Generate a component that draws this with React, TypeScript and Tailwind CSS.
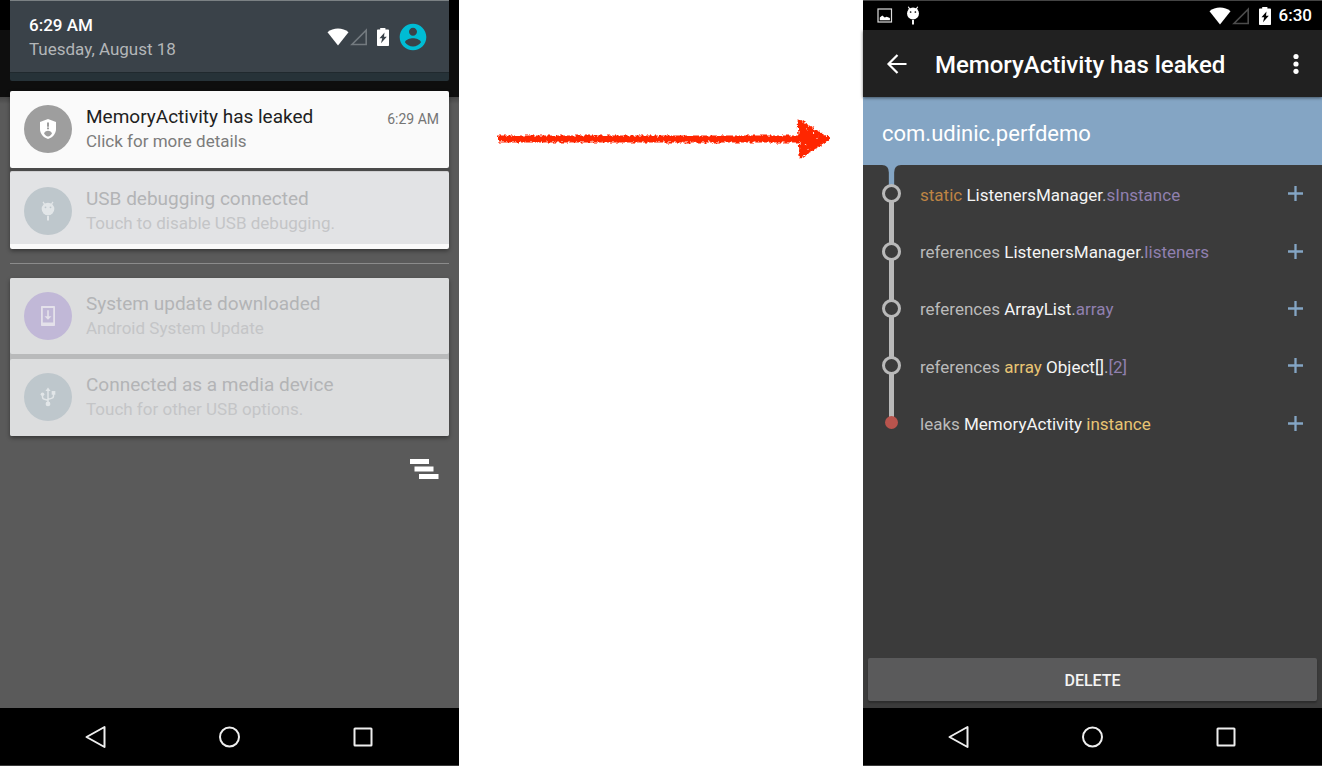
import type { ReactNode } from "react";

function WifiIcon() {
  return (
    <svg className="h-[18px] w-[22px]" viewBox="0 0 22 18" aria-hidden="true">
      <path d="M0.5 4.2C3.4 1.8 7 .5 11 .5s7.600 1.300 10.500 3.700L11 17.500z" fill="#fff" />
    </svg>
  );
}

function SignalIcon({ color }: { color: string }) {
  return (
    <svg className="ml-px h-[18px] w-[18px]" viewBox="0 0 18 18" aria-hidden="true">
      <path d="M16.200 2.200v14.300H2z" fill="none" stroke={color} strokeWidth="1.600" />
    </svg>
  );
}

function BatteryIcon({ bolt }: { bolt: string }) {
  return (
    <svg className="ml-2 h-[18px] w-3.5" viewBox="0 0 14 18" aria-hidden="true">
      <path d="M4.200 0h5.200v1.500h2.800c.5 0 .8.300.8.800v14.900c0 .5-.3.800-.8.800H1.800c-.5 0-.8-.3-.8-.8V2.300c0-.5.300-.8.800-.8h2.400z" fill="#fff" />
      <path d="M8.500 4.500L3.500 10.300h2.700L5 15.300l5.800-6.500H8z" fill={bolt} />
    </svg>
  );
}

function AndroidHead({ className, eye }: { className: string; eye: string }) {
  return (
    <svg className={className} viewBox="0 0 14 20" aria-hidden="true">
      <path d="M2 .8l2 3M12 .8l-2 3" stroke="currentColor" strokeWidth="1.200" />
      <circle cx="7" cy="8" r="6.300" fill="currentColor" />
      <path d="M6 14.800h2v4.600H6z" fill="currentColor" />
      <circle cx="4.500" cy="6.300" r="0.900" fill={eye} />
      <circle cx="9.500" cy="6.300" r="0.900" fill={eye} />
    </svg>
  );
}

function ShieldIcon() {
  return (
    <svg className="h-5 w-[18px]" viewBox="0 0 18 20" aria-hidden="true">
      <path d="M9 0L17 3v7c0 4.600-3.300 8.600-8 10-4.700-1.400-8-5.400-8-10V3z" fill="#fff" />
      <path d="M8 3.500h2v4.200H8zM8 8.600h2v1.600H8z" fill="#9e9e9e" />
      <path d="M5 14.200c1.200-1.800 2.500-2.500 4-2.500s2.800.7 4 2.500c-.9 1.800-2.400 3-4 3.400-1.600-.4-3.100-1.600-4-3.400z" fill="#9e9e9e" />
    </svg>
  );
}

function UpdateIcon() {
  return (
    <svg className="h-5 w-4" viewBox="0 0 16 20" aria-hidden="true">
      <path fillRule="evenodd" d="M2 0h12c.6 0 1 .4 1 1v18c0 .6-.4 1-1 1H2c-.6 0-1-.4-1-1V1c0-.6.4-1 1-1zm.8 2v14.500h10.400V2z" fill="#e4e1ea" />
      <path d="M7.200 4.300h1.600v5.900h2.700L8 13.700l-3.500-3.500h2.700z" fill="#e4e1ea" />
    </svg>
  );
}

function UsbIcon() {
  return (
    <svg className="h-[22px] w-[22px]" viewBox="0 0 24 24" aria-hidden="true">
      <g fill="none" stroke="#e2e6e8" strokeWidth="1.600">
        <path d="M12 4v15M6 9.500V12c0 2 1.500 2.500 3 2.800l3 .7M18 7.500V11c0 2-1.500 2.500-3 2.800l-3 .7" />
      </g>
      <g fill="#e2e6e8">
        <path d="M12 1.500l2.800 4H9.200z" />
        <circle cx="12" cy="19.500" r="2.600" />
        <circle cx="6" cy="9" r="2" />
        <path d="M16 5.500h4v4h-4z" />
      </g>
    </svg>
  );
}

type NoticeProps = {
  icon: ReactNode;
  disc: string;
  title: string;
  detail: string;
  time?: string;
  faded?: boolean;
  className: string;
};

function Notice({ icon, disc, title, detail, time, faded, className }: NoticeProps) {
  return (
    <article className={`flex gap-3.5 px-3.5 ${className}`}>
      <div className={`flex size-12 shrink-0 items-center justify-center rounded-full ${disc}`}>{icon}</div>
      <div className="min-w-0 flex-1">
        <h2 className={`text-[19px] leading-6 ${faded ? "text-[#b3b4b6]" : "text-[#212121]"}`}>{title}</h2>
        <p className={`text-[17px] leading-6 ${faded ? "text-[#c4c5c7]" : "text-[#7c7c7c]"}`}>{detail}</p>
      </div>
      {time && <time className="-mr-1 text-sm leading-7 text-[#757575]">{time}</time>}
    </article>
  );
}

function NavBar() {
  return (
    <nav className="flex h-[58px] shrink-0 justify-center border-b border-[#3a3a3a] bg-black">
      <button aria-label="Back" className="flex w-[29%] items-center justify-center">
        <svg className="size-6" viewBox="0 0 24 24" fill="none" stroke="#eee" strokeWidth="2" strokeLinejoin="round">
          <path d="M20.500 2v20L2.500 12z" />
        </svg>
      </button>
      <button aria-label="Home" className="flex w-[29%] items-center justify-center">
        <svg className="size-6" viewBox="0 0 24 24" fill="none" stroke="#eee" strokeWidth="2">
          <circle cx="12.500" cy="12" r="9.500" />
        </svg>
      </button>
      <button aria-label="Overview" className="flex w-[29%] items-center justify-center">
        <svg className="size-6" viewBox="0 0 24 24" fill="none" stroke="#eee" strokeWidth="2">
          <rect x="3.500" y="3.500" width="17" height="17" rx="0.500" />
        </svg>
      </button>
    </nav>
  );
}

function NotificationPhone() {
  return (
    <section className="flex flex-col bg-[#5a5a5a]">
      <div className="flex-1 bg-[linear-gradient(#000_0_30px,#0e0e0e_30px_97px,#474747_97px,#5a5a5a_104px)] px-2.5">
        <header className="rounded-b-xs border-b-8 border-[#263238] bg-[#3a4249]">
          <div className="flex items-center border-t border-b border-t-[#7b8184] border-b-[#20292e] pr-5 pl-[19px]">
            <div className="pt-3 pb-[11px] text-[17px] leading-6">
              <p className="font-medium text-white">6:29 AM</p>
              <p className="text-[#b3b6b8]">Tuesday, August 18</p>
            </div>
            <div className="ml-auto flex items-center">
              <WifiIcon />
              <SignalIcon color="#737a7f" />
              <BatteryIcon bolt="#3a4249" />
              <button aria-label="Account" className="ml-[7px]">
                <svg className="size-8" viewBox="0 0 24 24" fill="#00bcd4">
                  <path d="M12 2C6.480 2 2 6.480 2 12s4.480 10 10 10 10-4.480 10-10S17.520 2 12 2zm0 3c1.660 0 3 1.340 3 3s-1.340 3-3 3-3-1.340-3-3 1.340-3 3-3zm0 14.200c-2.500 0-4.710-1.280-6-3.220.030-1.990 4-3.080 6-3.080 1.990 0 5.970 1.090 6 3.080-1.290 1.940-3.500 3.220-6 3.220z" />
                </svg>
              </button>
            </div>
          </div>
        </header>

        <div className="mt-2.5 rounded-xs bg-[#4a4a4a] shadow-[0_2px_4px_rgba(0,0,0,0.4)]">
          <Notice
            className="rounded-xs bg-[#fafafa] pt-3.5 pb-[15px]"
            disc="bg-[#9e9e9e]"
            icon={<ShieldIcon />}
            title="MemoryActivity has leaked"
            detail="Click for more details"
            time="6:29 AM"
          />
          <Notice
            faded
            className="mt-[3px] rounded-xs border-t border-b-5 border-t-[#cfcfd1] border-b-[#fafafa] bg-[#e2e3e5] pt-[15px] pb-[9px]"
            disc="bg-[#bec7cc]"
            icon={<AndroidHead className="h-5 w-3.5 text-[#e2e6e8]" eye="#bec7cc" />}
            title="USB debugging connected"
            detail="Touch to disable USB debugging."
          />
        </div>

        <hr className="my-3.5 border-[#8b8b8b]" />

        <div className="rounded-xs bg-[#b9babb] shadow-[0_2px_4px_rgba(0,0,0,0.4)]">
          <Notice
            faded
            className="rounded-xs bg-[#dcddde] py-3.5"
            disc="bg-[#c1b8d7]"
            icon={<UpdateIcon />}
            title="System update downloaded"
            detail="Android System Update"
          />
          <Notice
            faded
            className="mt-[5px] rounded-xs bg-[#dcddde] pt-3.5 pb-[15px]"
            disc="bg-[#bec7cc]"
            icon={<UsbIcon />}
            title="Connected as a media device"
            detail="Touch for other USB options."
          />
        </div>

        <div className="flex justify-end pt-[22px] pr-2.5">
          <button aria-label="Clear all notifications">
            <svg className="h-[22px] w-[30px]" viewBox="0 0 30 22" fill="#fff">
              <path d="M1 1h19v5H1zM5.500 8.500h19v5h-19zM10 16h19.500v5H10z" />
            </svg>
          </button>
        </div>
      </div>
      <NavBar />
    </section>
  );
}

function ScribbledArrow() {
  return (
    <svg className="w-full" viewBox="0 0 334 44" role="img" aria-label="leads to">
      <defs>
        <filter id="crayon" x="-2%" y="-10%" width="104%" height="120%">
          <feTurbulence type="fractalNoise" baseFrequency="0.35" numOctaves="2" seed="4" result="noise" />
          <feDisplacementMap in="SourceGraphic" in2="noise" scale="5" xChannelSelector="R" yChannelSelector="G" />
        </filter>
      </defs>
      <g filter="url(#crayon)">
        <path d="M1 22H306" stroke="#ff2600" strokeWidth="7" />
        <path d="M303 4l29 17.500L305 40z" fill="#ff2600" stroke="#ff2600" strokeWidth="3" strokeLinejoin="round" />
        <path
          d="M304 14v2M305 25v3M303 32v3M313 33v1M311 12v1.500M322 20v1M309 28l1 1M317 16l1 1"
          stroke="#fff"
          strokeWidth="1"
        />
        <path d="M3 25H300" stroke="#fff" strokeWidth="0.500" strokeDasharray="1 9 1 14 2 19" />
      </g>
    </svg>
  );
}

type Tone = "plain" | "name" | "field" | "static" | "kind";

const tones: Record<Tone, string> = {
  plain: "text-[#bababa]",
  name: "text-[#f4f4f4]",
  field: "text-[#9080af]",
  static: "text-[#bd8444]",
  kind: "text-[#e8c473]",
};

const trace: [Tone, string][][] = [
  [["static", "static "], ["name", "ListenersManager"], ["plain", "."], ["field", "sInstance"]],
  [["plain", "references "], ["name", "ListenersManager"], ["plain", "."], ["field", "listeners"]],
  [["plain", "references "], ["name", "ArrayList"], ["plain", "."], ["field", "array"]],
  [["plain", "references "], ["kind", "array "], ["name", "Object[]"], ["plain", "."], ["field", "[2]"]],
  [["plain", "leaks "], ["name", "MemoryActivity "], ["kind", "instance"]],
];

function Connector({ first, last }: { first: boolean; last: boolean }) {
  return (
    <div className="flex w-[19px] shrink-0 flex-col items-center self-stretch">
      {first ? (
        <svg className="w-[19px] flex-1" viewBox="0 0 19 19" preserveAspectRatio="xMidYMin slice" aria-hidden="true">
          <path d="M0 0h19q-7 0-7 7v16H7V7q0-7-7-7z" fill="#84a5c4" />
        </svg>
      ) : (
        <div className="w-[5px] flex-1 bg-[#b9b9b9]" />
      )}
      {last ? (
        <div className="-mt-px size-[13px] rounded-full bg-[#b9544d]" />
      ) : (
        <div className="-my-px size-[19px] rounded-full border-3 border-[#b9b9b9]" />
      )}
      <div className={last ? "flex-1" : "w-[5px] flex-1 bg-[#b9b9b9]"} />
    </div>
  );
}

function LeakPhone() {
  return (
    <section className="flex flex-col bg-[#3b3b3b]">
      <div className="flex h-[30px] items-center border-t border-[#444] bg-black pr-2.5 pl-3.5">
        <svg className="h-[15px] w-4" viewBox="0 0 16 15" aria-hidden="true">
          <rect x="1" y="1" width="13.500" height="13" fill="none" stroke="#ddd" strokeWidth="1.200" />
          <path d="M2.800 12.300V9.500l2.500-2 2.400 2 2-.8 3.200 1.300v2.300z" fill="#fff" />
        </svg>
        <AndroidHead className="ml-[13px] h-[19px] w-3.5 text-white" eye="#000" />
        <div className="ml-auto flex items-center">
          <WifiIcon />
          <SignalIcon color="#4c4c4c" />
          <BatteryIcon bolt="#000" />
          <time className="ml-[7px] text-[17px] font-medium text-white">6:30</time>
        </div>
      </div>

      <header className="relative flex h-[67px] items-center bg-[#212121] pr-3.5 pl-[22px] shadow-[0_1px_3px_rgba(0,0,0,0.5)]">
        <button aria-label="Navigate up">
          <svg className="size-6" viewBox="0 0 24 24" fill="none" stroke="#fff" strokeWidth="2.200">
            <path d="M21.500 12H4M12.500 3L3.500 12l9 9" />
          </svg>
        </button>
        <h1 className="ml-[26px] pt-0.5 text-2xl font-medium text-white">MemoryActivity has leaked</h1>
        <button aria-label="More options" className="ml-auto">
          <svg className="size-6" viewBox="0 0 24 24" fill="#fff">
            <circle cx="12" cy="4.500" r="2.600" />
            <circle cx="12" cy="12" r="2.600" />
            <circle cx="12" cy="19.300" r="2.600" />
          </svg>
        </button>
      </header>

      <h2 className="flex h-[68px] items-center bg-[#84a5c4] px-[19px] pt-1 text-[22px] text-white">
        com.udinic.perfdemo
      </h2>

      <ol className="grid min-h-[287px] auto-rows-fr">
        {trace.map((parts, row) => (
          <li key={row} className="flex items-center pr-[18px] pl-[19px]">
            <Connector first={row === 0} last={row === trace.length - 1} />
            <p className="ml-[19px] flex-1 pt-0.5 text-[17px] leading-6">
              {parts.map(([tone, text], i) => (
                <span key={i} className={tones[tone]}>
                  {text}
                </span>
              ))}
            </p>
            <button aria-label="Expand" className="flex">
              <svg className="size-[17px]" viewBox="0 0 17 17" aria-hidden="true">
                <path d="M1 8.500h15M8.500 1v15" stroke="#84a5c4" strokeWidth="2.300" />
              </svg>
            </button>
          </li>
        ))}
      </ol>

      <div className="mt-auto px-[5px] pb-[7px]">
        <button className="h-[43px] w-full rounded-xs bg-[#5a5a5b] pt-0.5 text-base font-medium text-[#f4f4f4] shadow-[0_2px_2px_rgba(0,0,0,0.25)]">
          DELETE
        </button>
      </div>
      <NavBar />
    </section>
  );
}

export default function App() {
  return (
    <main className="grid min-h-screen grid-cols-[459fr_404fr_459fr] bg-white font-[Roboto,sans-serif]">
      <NotificationPhone />
      <div className="pt-[117px] pr-[33px] pl-[38px]">
        <ScribbledArrow />
      </div>
      <LeakPhone />
    </main>
  );
}
